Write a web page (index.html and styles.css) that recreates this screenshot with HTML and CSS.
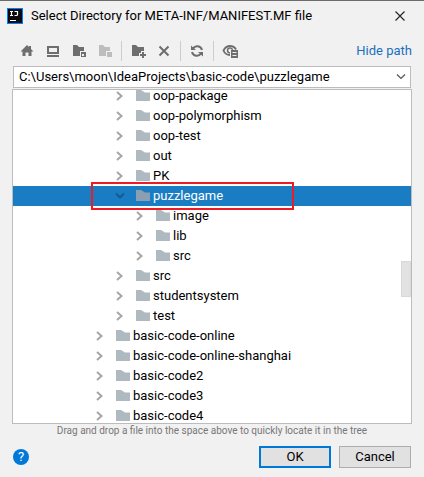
FILE: index.html
```html
<!DOCTYPE html>
<html lang="en">
<head>
<meta charset="utf-8">
<title>Select Directory for META-INF/MANIFEST.MF file</title>
<link rel="stylesheet" href="styles.css">
</head>
<body>
<svg class="defs" aria-hidden="true">
  <symbol id="folder" viewBox="0 0 14 11"><path d="M0 0h5l4 2.500h5V11H0z"/></symbol>
  <symbol id="right" viewBox="0 0 8 10"><path d="M1 1l4.500 4L1 9" fill="none" stroke="currentColor" stroke-width="2"/></symbol>
  <symbol id="down" viewBox="0 0 10 8"><path d="M1 1.500l4 4 4-4" fill="none" stroke="currentColor" stroke-width="2"/></symbol>
</svg>
<main class="dialog">
  <header class="titlebar">
    <svg class="logo" viewBox="0 0 16 16" aria-hidden="true">
      <path d="M0 0h16v16H0z" fill="#087cfa"/><path d="M1 1h14v14H1z" fill="#0b0b10"/>
      <path d="M3 3.500h3M4.500 3v5M3 7.500h3M7.500 3.500h3v3q0 1-1 1h-2" fill="none" stroke="#fff" stroke-width="1.200"/><path d="M3 12h6v1H3z" fill="#fff"/>
    </svg>
    <h1>Select Directory for META-INF/MANIFEST.MF file</h1>
    <button class="close" aria-label="Close"><svg width="10" height="10" viewBox="0 0 10 10"><path d="M.5.5l9 9M9.500.5l-9 9" stroke="#222" stroke-width="1.100"/></svg></button>
  </header>

  <div class="toolbar">
    <button aria-label="Home"><svg viewBox="0 0 16 16"><path d="M8 2L1.500 8.500h2V13h3V9.500h3V13h3V8.500h2L12 6V3h-2v1z"/></svg></button>
    <button aria-label="Desktop"><svg viewBox="0 0 16 16"><path d="M2 3h12v8H2zM4 5v4h8V5zM2 12h12v2H2z" fill-rule="evenodd"/></svg></button>
    <button aria-label="Project directory"><svg viewBox="0 0 16 16"><path d="M2 2h4l2 2h5v4H9v5H2zM10 9h5v5h-5zM11 11v2h2v-2z" fill-rule="evenodd"/></svg></button>
    <button aria-label="Module directory" disabled><svg viewBox="0 0 16 16"><path d="M2 2h4l2 2h5v4H9v5H2zM10 9h5v5h-5z"/></svg></button>
    <span class="sep"></span>
    <button aria-label="New folder"><svg viewBox="0 0 16 16"><path d="M2 2h4l2 2h6v4h-3v2H9v3H2zM12 9h2v2h2v2h-2v2h-2v-2h-2v-2h2z"/></svg></button>
    <button aria-label="Delete"><svg viewBox="0 0 16 16"><path d="M3.500 3.500l9 9M12.500 3.500l-9 9" stroke="currentColor" stroke-width="2"/></svg></button>
    <span class="sep"></span>
    <button aria-label="Refresh"><svg viewBox="0 0 16 16"><path d="M4 5.500A5 5 0 0 1 13 7M12 10.500A5 5 0 0 1 3 9" fill="none" stroke="currentColor" stroke-width="2"/><path d="M2 2.500V7h5zM14 13.500V9H9z"/></svg></button>
    <span class="sep"></span>
    <button aria-label="Show hidden files"><svg viewBox="0 0 16 16"><path d="M8 12C4.500 12 2.500 10 1.500 7.500 3 4.500 5 3 8 3s5 1.500 6 3.500" fill="none" stroke="currentColor" stroke-width="1.800"/><path d="M8 10a2.500 2.500 0 1 1 2.500-3" fill="none" stroke="currentColor" stroke-width="1.500"/><path d="M9 7h7v8H9zM10.500 9v1h4V9zM10.500 12v1h4v-1z" fill-rule="evenodd"/></svg></button>
    <a class="hide" href="#path">Hide path</a>
  </div>

  <div class="combo">
    <input id="path" type="text" aria-label="Path" value="C:\Users\moon\IdeaProjects\basic-code\puzzlegame">
    <button aria-label="Show recent paths"><svg width="10" height="6" viewBox="0 0 10 6"><path d="M1 .5l4 4 4-4" fill="none" stroke="#555" stroke-width="1.200"/></svg></button>
  </div>

  <div class="tree">
    <ul role="tree" aria-label="Directories">
      <li role="treeitem" class="row l2"><svg class="arrow"><use href="#right"/></svg><svg class="folder"><use href="#folder"/></svg>oop-package</li>
      <li role="treeitem" class="row l2"><svg class="arrow"><use href="#right"/></svg><svg class="folder"><use href="#folder"/></svg>oop-polymorphism</li>
      <li role="treeitem" class="row l2"><svg class="arrow"><use href="#right"/></svg><svg class="folder"><use href="#folder"/></svg>oop-test</li>
      <li role="treeitem" class="row l2"><svg class="arrow"><use href="#right"/></svg><svg class="folder"><use href="#folder"/></svg>out</li>
      <li role="treeitem" class="row l2"><svg class="arrow"><use href="#right"/></svg><svg class="folder"><use href="#folder"/></svg>PK</li>
      <li role="treeitem" class="row l2 selected" aria-selected="true" aria-expanded="true"><svg class="arrow"><use href="#down"/></svg><svg class="folder"><use href="#folder"/></svg>puzzlegame<span class="marker"></span></li>
      <li role="treeitem" class="row l3"><svg class="arrow"><use href="#right"/></svg><svg class="folder"><use href="#folder"/></svg>image</li>
      <li role="treeitem" class="row l3"><svg class="arrow"><use href="#right"/></svg><svg class="folder"><use href="#folder"/></svg>lib</li>
      <li role="treeitem" class="row l3"><svg class="arrow"><use href="#right"/></svg><svg class="folder"><use href="#folder"/></svg>src</li>
      <li role="treeitem" class="row l2"><svg class="arrow"><use href="#right"/></svg><svg class="folder"><use href="#folder"/></svg>src</li>
      <li role="treeitem" class="row l2"><svg class="arrow"><use href="#right"/></svg><svg class="folder"><use href="#folder"/></svg>studentsystem</li>
      <li role="treeitem" class="row l2"><svg class="arrow"><use href="#right"/></svg><svg class="folder"><use href="#folder"/></svg>test</li>
      <li role="treeitem" class="row l1"><svg class="arrow"><use href="#right"/></svg><svg class="folder"><use href="#folder"/></svg>basic-code-online</li>
      <li role="treeitem" class="row l1"><svg class="arrow"><use href="#right"/></svg><svg class="folder"><use href="#folder"/></svg>basic-code-online-shanghai</li>
      <li role="treeitem" class="row l1"><svg class="arrow"><use href="#right"/></svg><svg class="folder"><use href="#folder"/></svg>basic-code2</li>
      <li role="treeitem" class="row l1"><svg class="arrow"><use href="#right"/></svg><svg class="folder"><use href="#folder"/></svg>basic-code3</li>
      <li role="treeitem" class="row l1"><svg class="arrow"><use href="#right"/></svg><svg class="folder"><use href="#folder"/></svg>basic-code4</li>
    </ul>
    <span class="thumb"></span>
  </div>
  <p class="hint">Drag and drop a file into the space above to quickly locate it in the tree</p>

  <footer class="actions">
    <button class="help" aria-label="Help">?</button>
    <button class="btn primary">OK</button>
    <button class="btn">Cancel</button>
  </footer>
</main>
</body>
</html>
```
FILE: styles.css
```css
* { box-sizing: border-box; }
body {
  margin: 0;
  background: #f1f1f1;
  color: #000;
  font: 13px/20px Roboto, "Open Sans", sans-serif;
}
button, input { font: inherit; color: inherit; }
button { border: 0; padding: 0; background: none; }
svg { display: block; flex: none; fill: currentColor; }
.defs { position: absolute; width: 0; height: 0; }

.dialog {
  display: flex;
  flex-direction: column;
  height: 100vh;
  padding: 0 12px 9px;
  border-top: 1px solid #6b6b6b;
}
.titlebar {
  display: flex;
  align-items: center;
  height: 30px;
  margin: 0 0 0 -5px;
}
.logo { width: 16px; height: 16px; }
h1 { margin: 0 0 0 8px; font-size: 13px; font-weight: 400; white-space: nowrap; }
.close { display: flex; margin-left: auto; padding: 6px 7px; }

.toolbar {
  display: flex;
  align-items: center;
  height: 35px;
  padding: 5px 0 0 2px;
  color: #6e6e6e;
}
.toolbar button { padding: 0 5px; }
.toolbar button:disabled { color: #bdbdbd; }
.toolbar svg { width: 16px; height: 16px; }
.sep { width: 1px; height: 20px; margin: 0 3px; background: #cdcdcd; }
.hide { margin-left: auto; color: #1a70c0; text-decoration: none; white-space: nowrap; }

.combo {
  display: flex;
  align-items: center;
  flex: none;
  height: 22px;
  margin: 0 1px 1px;
  border: 1px solid #bcbcbc;
  background: #fff;
}
.combo input { flex: 1; min-width: 0; height: 20px; padding: 0 5px; border: 0; outline: 0; background: none; }
.combo button { padding: 4px; }

.tree {
  position: relative;
  flex: 1 1 0;
  min-height: 0;
  overflow: hidden;
  border: 1px solid #bcbcbc;
  background: #fff;
}
.tree ul { margin: -4px 0 0; padding: 0; list-style: none; }
.row { display: flex; align-items: center; height: 20px; padding-bottom: 1px; line-height: 18px; }
.l1 { padding-left: 82px; }
.l2 { padding-left: 102px; }
.l3 { padding-left: 122px; }
.arrow { width: 10px; height: 10px; color: #a6a6a6; }
.folder { width: 14px; height: 11px; margin: 0 3px 0 11px; color: #aeb9c0; }
.selected { position: relative; background: #1a7dc4; color: #fff; }
.selected .arrow { color: #155a8c; }
.selected .folder { color: #8aa0b2; }
.marker {
  position: absolute;
  top: -4px;
  left: 78px;
  z-index: 1;
  width: 203px;
  height: 28px;
  border: 2px solid #ed1c24;
}
.thumb {
  position: absolute;
  top: 171px;
  right: 0;
  width: 10px;
  height: 36px;
  border: 1px solid #d9d9d9;
  background: #e2e2e2;
}
.hint {
  margin: 0;
  color: #777;
  font-size: 10px;
  line-height: 14px;
  text-align: center;
  white-space: nowrap;
}
.actions {
  display: flex;
  align-items: center;
  gap: 8px;
  margin: 8px 1px 0;
}
.help {
  width: 16px;
  height: 16px;
  margin-right: auto;
  border-radius: 50%;
  background: #0078d7;
  color: #fff;
  line-height: 16px;
}
.btn { width: 72px; height: 22px; border: 1px solid #adadad; background: #e1e1e1; line-height: 18px; }
.primary { border: 2px solid #0078d7; }
```
